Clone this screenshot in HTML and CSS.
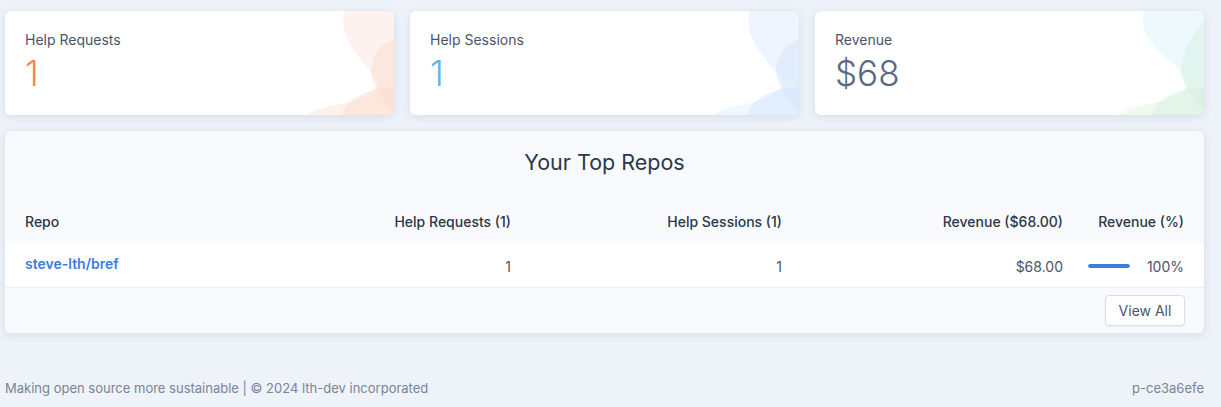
FILE: index.html
```html
<!DOCTYPE html>
<html lang="en">
<head>
  <meta charset="UTF-8" />
  <title>Dashboard</title>
  <link rel="stylesheet" href="styles.css">
</head>
<body>

  <div class="page">
    <div class="stats">
      <div class="stat-card peach">
        <svg class="blob" viewBox="0 0 90 104" preserveAspectRatio="none">
          <path class="b1" d="M40 0 C36 25 50 40 62 55 C72 68 82 80 90 88 L90 0 Z" />
          <path class="b3" d="M4 104 C20 92 45 96 65 82 C76 74 84 66 90 60 L90 104 Z" />
          <path class="b2" d="M90 28 C72 35 62 55 70 72 C76 85 84 95 90 100 Z" />
          <path class="b2" d="M38 104 C40 90 60 78 90 76 L90 104 Z" />
        </svg>
        <div class="stat-label">Help Requests</div>
        <div class="stat-value orange">1</div>
      </div>
      <div class="stat-card sky">
        <svg class="blob" viewBox="0 0 90 104" preserveAspectRatio="none">
          <path class="b1" d="M40 0 C36 25 50 40 62 55 C72 68 82 80 90 88 L90 0 Z" />
          <path class="b3" d="M4 104 C20 92 45 96 65 82 C76 74 84 66 90 60 L90 104 Z" />
          <path class="b2" d="M90 28 C72 35 62 55 70 72 C76 85 84 95 90 100 Z" />
          <path class="b2" d="M38 104 C40 90 60 78 90 76 L90 104 Z" />
        </svg>
        <div class="stat-label">Help Sessions</div>
        <div class="stat-value blue">1</div>
      </div>
      <div class="stat-card mint">
        <svg class="blob" viewBox="0 0 90 104" preserveAspectRatio="none">
          <path class="b1" d="M30 0 C24 25 45 42 62 55 C72 68 82 80 90 88 L90 0 Z" />
          <path class="b3" d="M4 104 C20 92 45 96 65 82 C76 74 84 66 90 60 L90 104 Z" />
          <path class="b2" d="M90 10 C72 30 62 55 70 72 C76 85 84 95 90 100 Z" />
          <path class="b2" d="M38 104 C40 90 60 78 90 76 L90 104 Z" />
        </svg>
        <div class="stat-label">Revenue</div>
        <div class="stat-value slate">$68</div>
      </div>
    </div>

    <div class="repos-card">
      <h2>Your Top Repos</h2>
      <table class="repos">
        <colgroup>
          <col style="width: 275px">
          <col style="width: 243px">
          <col style="width: 271px">
          <col style="width: 281px">
          <col style="width: 129px">
        </colgroup>
        <thead>
          <tr>
            <th class="left">Repo</th>
            <th>Help Requests (1)</th>
            <th>Help Sessions (1)</th>
            <th>Revenue ($68.00)</th>
            <th class="last">Revenue (%)</th>
          </tr>
        </thead>
        <tbody>
          <tr>
            <td class="left"><a href="#" class="repo-link">steve-lth/bref</a></td>
            <td>1</td>
            <td>1</td>
            <td>$68.00</td>
            <td class="last">
              <div class="pct">
                <span class="bar"><span class="bar-fill" style="width: 100%"></span></span>
                <span>100%</span>
              </div>
            </td>
          </tr>
        </tbody>
      </table>
      <div class="repos-footer">
        <button class="btn">View All</button>
      </div>
    </div>

    <footer class="site-footer">
      <span>Making open source more sustainable | © 2024 lth-dev incorporated</span>
      <span>p-ce3a6efe</span>
    </footer>
  </div>

</body>
</html>
```

FILE: styles.css
```css
* {
  margin: 0;
  padding: 0;
  box-sizing: border-box;
  font-family: Inter, "Liberation Sans", sans-serif;
}

body {
  background-color: #eef2f9;
  color: #2d3748;
  height: 407px;
  overflow: hidden;
}

.page {
  width: 1199px;
  margin-left: 5px;
  padding-top: 11px;
}

.stats {
  display: grid;
  grid-template-columns: repeat(3, 1fr);
  gap: 16px;
}

.stat-card {
  position: relative;
  height: 104px;
  background: #fff;
  border-radius: 6px;
  box-shadow: 0 2px 10px rgba(60, 72, 100, 0.12);
  padding: 19px 20px 0;
  overflow: hidden;
}

.blob {
  position: absolute;
  top: 0;
  right: 0;
  width: 90px;
  height: 100%;
}

.peach .b1 { fill: #fdf2ef; }
.peach .b2 { fill: #fbd9cc; opacity: 0.45; }
.peach .b3 { fill: #fdf2ea; }

.sky .b1 { fill: #eff5fe; }
.sky .b2 { fill: #d4e6fb; opacity: 0.5; }
.sky .b3 { fill: #eef8fe; }

.mint .b1 { fill: #eef9fd; }
.mint .b2 { fill: #d6f0e4; opacity: 0.5; }
.mint .b3 { fill: #f1faef; }

.stat-label {
  position: relative;
  font-size: 14px;
  line-height: 20px;
  color: #4a5568;
}

.stat-value {
  position: relative;
  margin-top: 3px;
  font-size: 35px;
  line-height: 40px;
  font-weight: 300;
}

.orange { color: #ee8a52; }
.blue { color: #5db4f0; }
.slate { color: #5a6882; }

.repos-card {
  margin-top: 16px;
  background: #f8fafd;
  border-radius: 6px;
  box-shadow: 0 2px 10px rgba(60, 72, 100, 0.12);
  overflow: hidden;
}

.repos-card h2 {
  text-align: center;
  font-size: 21.5px;
  font-weight: 400;
  line-height: 31px;
  padding: 16px 0 22px;
  color: #2d3748;
}

.repos {
  width: 100%;
  table-layout: fixed;
  border-collapse: collapse;
  font-size: 14px;
}

.repos th,
.repos td {
  text-align: right;
  padding: 0 12px 0 0;
  white-space: nowrap;
}

.repos th {
  height: 43px;
  font-weight: 500;
  color: #2d3748;
}

.repos td {
  height: 44px;
  background: #fff;
  border-bottom: 1px solid #edf0f5;
  color: #4a5568;
  padding-top: 3px;
}

.repos .left {
  text-align: left;
  padding-left: 20px;
}

.repos td.left {
  padding-top: 0;
  padding-bottom: 2px;
}

.repos .last {
  text-align: right;
  padding-left: 13px;
  padding-right: 20px;
}

.repo-link {
  color: #3b7ddd;
  font-weight: 600;
  text-decoration: none;
}

.pct {
  display: flex;
  align-items: center;
  justify-content: space-between;
}

.bar {
  width: 42px;
  height: 4px;
  border-radius: 2px;
  background: #e2e8f0;
  overflow: hidden;
}

.bar-fill {
  display: block;
  height: 100%;
  background: #3b7ddd;
  border-radius: 2px;
}

.repos-footer {
  display: flex;
  justify-content: flex-end;
  padding: 7px 19px 7px;
}

.btn {
  height: 31px;
  width: 80px;
  background: #fff;
  border: 1px solid #d8dde6;
  border-radius: 4px;
  box-shadow: 0 1px 2px rgba(0, 0, 0, 0.06);
  font-size: 14px;
  color: #4a5568;
}

.site-footer {
  display: flex;
  justify-content: space-between;
  margin-top: 45px;
  font-size: 13px;
  line-height: 20px;
  color: #7a8496;
}
```
